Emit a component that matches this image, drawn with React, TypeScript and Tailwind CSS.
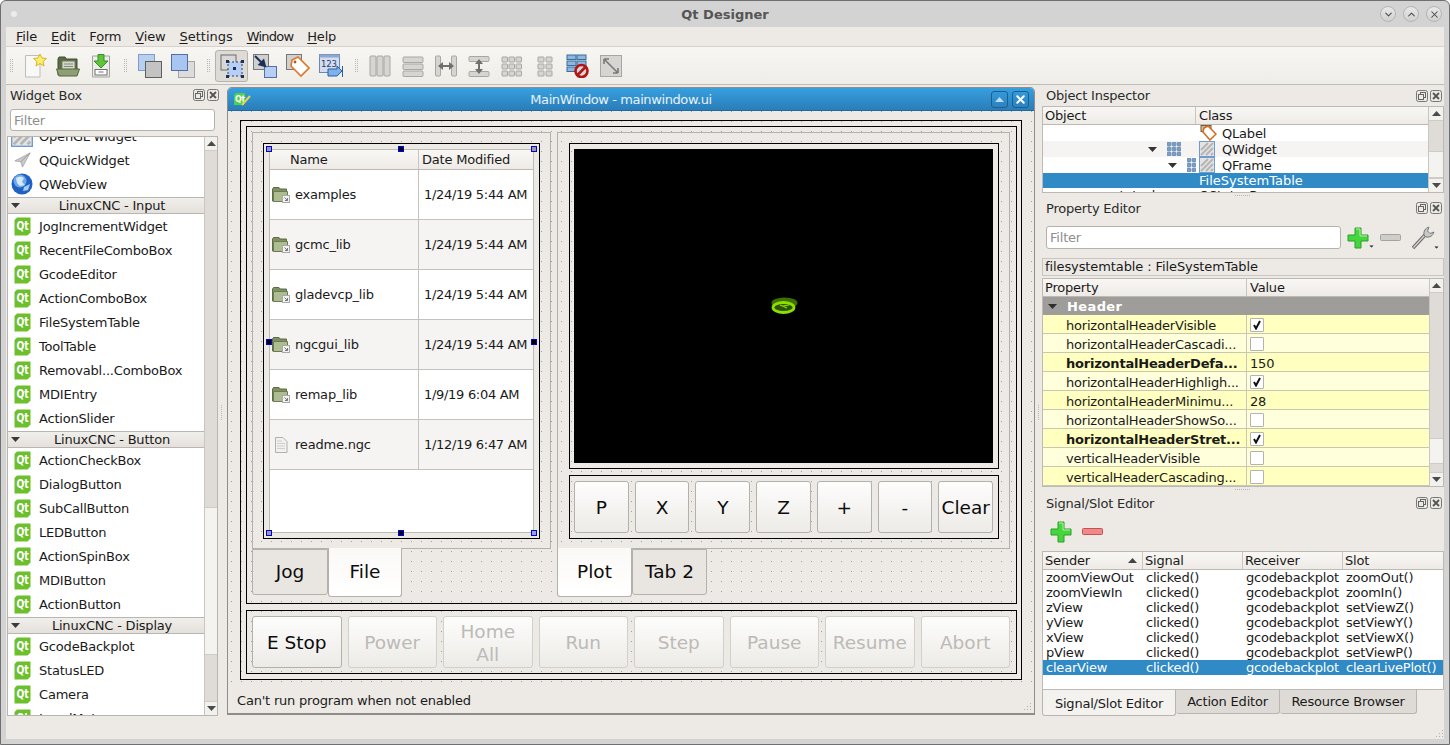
import React from 'react';
import { ChevronDown, ChevronUp, X } from 'lucide-react';

// ============================================================================
// DATA
// ============================================================================

const inputWidgets = ['JogIncrementWidget', 'RecentFileComboBox', 'GcodeEditor', 'ActionComboBox', 'FileSystemTable', 'ToolTable', 'Removabl...ComboBox', 'MDIEntry', 'ActionSlider'];
const buttonWidgets = ['ActionCheckBox', 'DialogButton', 'SubCallButton', 'LEDButton', 'ActionSpinBox', 'MDIButton', 'ActionButton'];
const displayWidgets = ['GcodeBackplot', 'StatusLED', 'Camera', 'LevelMeter'];

const files = [
  { name: 'examples', date: '1/24/19 5:44 AM', dir: true },
  { name: 'gcmc_lib', date: '1/24/19 5:44 AM', dir: true },
  { name: 'gladevcp_lib', date: '1/24/19 5:44 AM', dir: true },
  { name: 'ngcgui_lib', date: '1/24/19 5:44 AM', dir: true },
  { name: 'remap_lib', date: '1/9/19 6:04 AM', dir: true },
  { name: 'readme.ngc', date: '1/12/19 6:47 AM', dir: false },
];

const properties = [
  { name: 'horizontalHeaderVisible', check: true },
  { name: 'horizontalHeaderCascadi...', check: false },
  { name: 'horizontalHeaderDefa...', value: '150', bold: true },
  { name: 'horizontalHeaderHighligh...', check: true },
  { name: 'horizontalHeaderMinimu...', value: '28' },
  { name: 'horizontalHeaderShowSo...', check: false },
  { name: 'horizontalHeaderStret...', check: true, bold: true },
  { name: 'verticalHeaderVisible', check: false },
  { name: 'verticalHeaderCascading...', check: false },
];

const connections = [
  ['zoomViewOut', 'zoomOut()'],
  ['zoomViewIn', 'zoomIn()'],
  ['zView', 'setViewZ()'],
  ['yView', 'setViewY()'],
  ['xView', 'setViewX()'],
  ['pView', 'setViewP()'],
  ['clearView', 'clearLivePlot()'],
];

const headerBg = 'bg-gradient-to-b from-[#f9f7f4] to-[#eeebe7] border-b border-[#bdbab5]';
const formDots = 'bg-[radial-gradient(circle_at_3.5px_0.5px,#a0a0a0_0.6px,transparent_0.8px)] bg-[length:10px_10px]';

// ============================================================================
// ICONS
// ============================================================================

const QtIcon = () => (
  <svg width="17" height="19" viewBox="0 0 17 19" className="shrink-0">
    <path d="M3 0.5 H16.5 V15.5 L13.5 18.5 H0.5 V3 Z" fill="#6cc02c" />
    <text x="2.5" y="13" fontSize="12" fontWeight="700" fill="#fff" textLength="12" lengthAdjust="spacingAndGlyphs">Qt</text>
  </svg>
);

const HatchIcon = ({ size = 16 }: { size?: number }) => (
  <svg width={size} height={size} viewBox="0 0 16 16" className="shrink-0">
    <rect x="0.5" y="0.5" width="15" height="15" fill="#e4e4e4" stroke="#6f9bd1" />
    <path d="M2 9 L9 2 M2 14 L14 2 M7 14 L14 7 M12 14 L14 12" stroke="#b5b5b5" strokeWidth="2" />
  </svg>
);

const PlaneIcon = () => (
  <svg width="17" height="16" viewBox="0 0 20 18" preserveAspectRatio="none" className="shrink-0">
    <path d="M19 1 L1 10 L8 11 L10 17 Z" fill="#c9c9c9" stroke="#9c9c9c" strokeWidth="0.8" />
    <path d="M19 1 L8 11" stroke="#8e8e8e" strokeWidth="0.8" />
  </svg>
);

const GlobeIcon = () => (
  <svg width="22" height="22" viewBox="0 0 22 22" className="shrink-0 -ml-[3px]">
    <circle cx="11" cy="11" r="10.5" fill="#1f62c4" />
    <circle cx="9" cy="8" r="6.5" fill="#6fa9ea" />
    <path d="M5 5 Q10 2 13 5 L11 9 L14 12 L9 13 L6 10 Z" fill="#d7e8fa" />
    <path d="M13 14 L19 11 L17 17 L12 18 Z" fill="#a9cdf2" />
  </svg>
);

const FolderIcon = () => (
  <svg width="18" height="16" viewBox="0 0 18 16" className="shrink-0">
    <path d="M0.5 14 V2 L1.5 0.5 H7 L8 2 H14.5 V14 Z" fill="#7f9160" stroke="#5d6b47" />
    <path d="M1.5 4.5 H15.5 V14.5 H1.5 Z" fill="#aebc92" stroke="#6d7b55" />
    <rect x="10.5" y="8.5" width="7" height="7" fill="#f2f2f0" stroke="#a9a9a9" />
    <path d="M12.5 10.5 L15.5 13.5 M15.5 11 V13.5 H13" stroke="#777" fill="none" />
  </svg>
);

const DocIcon = () => (
  <svg width="14" height="16" viewBox="0 0 14 16" className="shrink-0">
    <path d="M1.5 0.5 H9 L13 4.5 V15.5 H1.5 Z" fill="#f0f0ee" stroke="#b0b0ae" />
    <path d="M3 4 H8 M3 6.5 H11 M3 9 H11 M3 11.5 H11" stroke="#cfcfcd" />
  </svg>
);

const TagIcon = () => (
  <svg width="17" height="16" viewBox="0 0 17 16" className="shrink-0">
    <rect x="1" y="0.5" width="10" height="6" fill="#d8b98a" stroke="#6b5a3c" />
    <path d="M4 3 L8 1 L16 9 L10 15 L3 7 Z" fill="#fff" stroke="#d2691e" strokeWidth="1.5" />
  </svg>
);

const GridDots = ({ cols = 3 }: { cols?: number }) => (
  <svg width={cols === 3 ? 14 : 9} height="14" viewBox={cols === 3 ? '0 0 14 14' : '5 0 9 14'} className="shrink-0">
    {[1, 6, 11].map((y) =>
      [1, 6, 11].map((x) => <rect key={`${x}-${y}`} x={x - 1} y={y - 1} width="4" height="4" rx="1" fill="#7e9fc4" stroke="#5a7da5" strokeWidth="0.5" />)
    )}
  </svg>
);

const Triangle = ({ up = false, className = '' }: { up?: boolean; className?: string }) => (
  <svg width="9" height="5" viewBox="0 0 9 5" className={`shrink-0 ${className}`}>
    <path d={up ? 'M0 5 L4.5 0 L9 5 Z' : 'M0 0 L9 0 L4.5 5 Z'} fill="currentColor" />
  </svg>
);

const FloatIcon = () => (
  <svg width="12" height="12" viewBox="0 0 12 12">
    <rect x="0.5" y="0.5" width="11" height="11" rx="2" fill="none" stroke="#777" />
    <rect x="4.5" y="2.5" width="5" height="5" fill="none" stroke="#666" />
    <rect x="2.5" y="4.5" width="5" height="5" fill="#edeae6" stroke="#666" />
  </svg>
);

const CloseIcon = () => (
  <svg width="12" height="12" viewBox="0 0 12 12">
    <rect x="0.5" y="0.5" width="11" height="11" rx="2" fill="none" stroke="#777" />
    <path d="M3 3 L9 9 M9 3 L3 9" stroke="#555" strokeWidth="1.8" />
  </svg>
);

const PlusIcon = ({ size = 22 }: { size?: number }) => (
  <svg width={size} height={size} viewBox="0 0 22 22" className="shrink-0">
    <path d="M8 1 H14 V8 H21 V14 H14 V21 H8 V14 H1 V8 H8 Z" fill="#45d63d" stroke="#2c9e2a" />
    <path d="M9 2 H13 V9 H20" fill="none" stroke="#b4f2a8" />
  </svg>
);

const MinusIcon = ({ red = false }: { red?: boolean }) => (
  <svg width="21" height="7" viewBox="0 0 21 7" className="shrink-0">
    <rect x="0.5" y="0.5" width="20" height="6" rx="1" fill={red ? '#f08a8a' : '#cfcdc9'} stroke={red ? '#c95050' : '#a5a3a0'} />
  </svg>
);

const WrenchIcon = () => (
  <svg width="24" height="24" viewBox="0 0 24 24" className="shrink-0">
    <path d="M2 22 L14 9" stroke="#6a6a6a" strokeWidth="3.4" />
    <path d="M2.5 21.5 L13.5 9.5" stroke="#d8d8d8" strokeWidth="1.2" />
    <path d="M13 9 Q12 3 18 1 L16.5 5 L19 7.5 L23 6 Q21 12 15 11 Z" fill="#c8c8c8" stroke="#7a7a7a" />
  </svg>
);

const ResizeGrip = ({ className = '' }: { className?: string }) => (
  <svg width="9" height="9" viewBox="0 0 9 9" className={`shrink-0 ${className}`}>
    {[[7, 1], [4, 4], [7, 4], [1, 7], [4, 7], [7, 7]].map(([x, y]) => (
      <rect key={`${x}${y}`} x={x} y={y} width="1" height="1" fill="#b3b1ac" />
    ))}
  </svg>
);

const ToolbarIcon = ({ name }: { name: string }) => {
  const grey = { fill: '#d6d5d2', stroke: '#a8a7a4' };
  const dark = '#6f6f6f';
  return (
    <svg width="24" height="24" viewBox="0 0 24 24">
      {name === 'new' && (
        <>
          <path d="M2.5 1.5 H17 V23 H2.5 Z" fill="#f8f8f6" stroke="#bdbdba" />
          <path d="M17 0 L19 4 L23.5 4.5 L20 7.5 L21 12 L17 9.5 L13 12 L14 7.5 L10.5 4.5 L15 4 Z" fill="#ffef6b" stroke="#d3b628" />
        </>
      )}
      {name === 'open' && (
        <>
          <path d="M2 21 V5 L3 3 H9 L10.5 5 H21 V21 Z" fill="#5b6c45" stroke="#414e30" />
          <rect x="6" y="7" width="13" height="9" fill="#d5d8ce" stroke="#707a62" />
          <path d="M8 10 H17 M8 12.5 H17" stroke="#848c78" />
          <path d="M0.5 15 H23.5 L21 22 H3 Z" fill="#8d9f73" stroke="#56643f" />
        </>
      )}
      {name === 'save' && (
        <>
          <path d="M3.5 2 H20.5 V23 H3.5 Z" fill="#ececea" stroke="#a3a3a0" />
          <rect x="6" y="15.5" width="12" height="5.5" fill="#fff" stroke="#6f6f6d" />
          <rect x="9.5" y="17" width="5" height="2" fill="#b8b8b6" />
          <path d="M9 0.5 H15 V7 H19 L12 14 L5 7 H9 Z" fill="#5fc43a" stroke="#3a8e25" />
        </>
      )}
      {name === 'back' && (
        <>
          <rect x="0.5" y="0.5" width="16" height="16" fill="#b9cff0" stroke="#7e9ccc" />
          <rect x="7.5" y="7.5" width="16" height="16" fill="#c3c3c3" stroke="#5f5f5f" />
        </>
      )}
      {name === 'front' && (
        <>
          <rect x="7.5" y="7.5" width="16" height="16" fill="#dcdcdc" stroke="#a5a5a5" />
          <rect x="0.5" y="0.5" width="16" height="16" fill="#a9c5f2" stroke="#51709f" />
        </>
      )}
      {name === 'widgets' && (
        <>
          <rect x="1" y="1" width="15" height="15" fill="#d8d8d8" stroke="#6d6d6d" />
          <rect x="8" y="8" width="14" height="14" fill="#b7cff5" stroke="#26406b" strokeDasharray="2 2" />
          {[[6, 6], [21, 6], [6, 21], [21, 21], [13, 13]].map(([x, y]) => (
            <rect key={`${x}${y}`} x={x} y={y} width="3" height="3" fill="#1c2f55" />
          ))}
        </>
      )}
      {name === 'signals' && (
        <>
          <rect x="0.5" y="0.5" width="15" height="15" fill="#d0d0d0" stroke="#777" />
          <rect x="11.5" y="12.5" width="12" height="11" fill="#b7cff5" stroke="#53719f" />
          <path d="M2 2 L10 10 M12 12 L6.5 10.5 L10.5 6.5 Z" stroke="#1c2f55" strokeWidth="2" fill="#1c2f55" />
        </>
      )}
      {name === 'buddies' && (
        <>
          <rect x="0.5" y="0.5" width="15" height="15" fill="#d0d0d0" stroke="#777" />
          <path d="M6 6 L12 3 L23 14 L15 22 L5 12 Z" fill="#fff" stroke="#e0762a" strokeWidth="1.6" />
          <circle cx="9" cy="8" r="1.4" fill="#b05a1c" />
        </>
      )}
      {name === 'tabs' && (
        <>
          <rect x="0.5" y="0.5" width="20" height="18" fill="#d3ddef" stroke="#6b86b0" />
          <rect x="0.5" y="0.5" width="20" height="3" fill="#8ea8cf" />
          <text x="2" y="13" fontSize="8.5" fill="#26406b">123</text>
          <path d="M9 15 H18 V12 L23 17 L18 22 H9 Z" fill="#7fb2ea" stroke="#2a5da5" />
          <rect x="23" y="12" width="1" height="11" fill="#2a5da5" />
        </>
      )}
      {name === 'lv' && [2, 9, 16].map((x) => <rect key={x} x={x} y="2" width="6" height="20" rx="1" {...grey} />)}
      {name === 'lh' && [3, 10, 17].map((y) => <rect key={y} x="2" y={y} width="20" height="5.5" rx="1" {...grey} />)}
      {name === 'sv' && (
        <>
          <rect x="1.5" y="2" width="5" height="20" rx="1" {...grey} />
          <rect x="17.5" y="2" width="5" height="20" rx="1" {...grey} />
          <path d="M4 12 L9 8 V16 Z M20 12 L15 8 V16 Z" fill={dark} />
          <rect x="8" y="11" width="8" height="2" fill={dark} />
        </>
      )}
      {name === 'sh' && (
        <>
          <rect x="2" y="2.5" width="20" height="5" rx="1" {...grey} />
          <rect x="2" y="17.5" width="20" height="5" rx="1" {...grey} />
          <path d="M12 5 L8 10 H16 Z M12 20 L8 15 H16 Z" fill={dark} />
          <rect x="11" y="9" width="2" height="7" fill={dark} />
        </>
      )}
      {name === 'grid' &&
        [3, 10, 17].map((y) => [2, 9, 16].map((x) => <rect key={`${x}${y}`} x={x} y={y} width="5.5" height="5" rx="0.5" {...grey} />))}
      {name === 'form' &&
        [3, 10, 17].map((y) => [5, 13].map((x) => <rect key={`${x}${y}`} x={x} y={y} width="6" height="5" rx="0.5" {...grey} />))}
      {name === 'break' && (
        <>
          {[1, 7, 13].map((y) => (
            <g key={y}>
              <rect x="1" y={y} width="9" height="4.5" fill="#8fb7dd" stroke="#3a6c9c" />
              <rect x="11" y={y} width="9" height="4.5" fill="#8fb7dd" stroke="#3a6c9c" />
            </g>
          ))}
          <circle cx="15.5" cy="17" r="6" fill="#d8d8d8" stroke="#b01818" strokeWidth="2.6" />
          <path d="M11 21.5 L20 12.5" stroke="#b01818" strokeWidth="2.6" />
        </>
      )}
      {name === 'adjust' && (
        <>
          <rect x="1.5" y="1.5" width="21" height="21" {...grey} />
          <path d="M5 5 L19 19 M5 5 H10 M5 5 V10 M19 19 H14 M19 19 V14" stroke="#7a7a78" strokeWidth="1.6" fill="none" />
        </>
      )}
    </svg>
  );
};

// ============================================================================
// SMALL PIECES
// ============================================================================

const ToolHandle = ({ className = '' }: { className?: string }) => (
  <div className={`grid grid-cols-2 gap-x-[1px] gap-y-[1px] w-[3px] shrink-0 ${className}`}>
    {Array.from({ length: 14 }).map((_, i) => (
      <span key={i} className="w-[1px] h-[1px] bg-[#b9b7b3]" />
    ))}
  </div>
);

const ToolButton = ({ name, active = false }: { name: string; active?: boolean }) => (
  <div className={`w-[33px] h-[32px] flex items-center justify-center shrink-0 rounded-[3px] ${active ? 'bg-[#dedbd6] border border-[#b5b2ad]' : ''}`}>
    <ToolbarIcon name={name} />
  </div>
);

const MenuItem = ({ before = '', mark, after, className = '' }: { before?: string; mark: string; after: string; className?: string }) => (
  <span className={`text-[#1c1c1c] ${className}`}>
    {before}
    <span className="underline underline-offset-2">{mark}</span>
    {after}
  </span>
);

const DockTitle = ({ title, className = '' }: { title: string; className?: string }) => (
  <div className={`flex items-center shrink-0 justify-between ${className}`}>
    <span className="text-[#2a2a2a]">{title}</span>
    <div className="flex gap-[2px]">
      <FloatIcon />
      <CloseIcon />
    </div>
  </div>
);

const FilterInput = ({ className = '' }: { className?: string }) => (
  <div className={`bg-white border border-[#b5b2ad] rounded-[3px] flex items-center pl-[3px] text-[#8e8e8e] shrink-0 ${className}`}>Filter</div>
);

const ScrollBar = ({ beforeClass, thumbClass, className = '' }: { beforeClass: string; thumbClass: string; className?: string }) => (
  <div className={`flex flex-col shrink-0 bg-[#dfdcd7] text-[#4a4a4a] border-l border-[#c9c6c1] ${className}`}>
    <div className="h-[14px] shrink-0 flex items-center justify-center bg-[#f3f1ee] border-b border-[#cfccc7]">
      <Triangle up />
    </div>
    <div className={`shrink-0 ${beforeClass}`} />
    <div className={`shrink-0 bg-[#f5f3f0] border-y border-[#cfccc7] ${thumbClass}`} />
    <div className="flex-1" />
    <div className="h-[14px] shrink-0 flex items-center justify-center bg-[#f3f1ee] border-t border-[#cfccc7]">
      <Triangle />
    </div>
  </div>
);

const WidgetRow = ({ label, icon }: { label: string; icon?: React.ReactNode }) => (
  <div className="h-[24px] shrink-0 flex items-center text-[#1a1a1a] bg-white">
    <div className="w-[31px] pl-[6px] flex items-center shrink-0">{icon ?? <QtIcon />}</div>
    <span>{label}</span>
  </div>
);

const Category = ({ label }: { label: string }) => (
  <div className="h-[17px] mt-[1px] shrink-0 flex items-center relative justify-center bg-gradient-to-b from-[#f1efeb] to-[#e4e1dc] border-y border-[#b9b6b1] text-[#1a1a1a]">
    <Triangle className="absolute left-[3px] text-[#3a3a3a]" />
    <span className="pl-[12px]">{label}</span>
  </div>
);

const Handle = ({ className, black = false, grey = false }: { className: string; black?: boolean; grey?: boolean }) => (
  <span className={`absolute w-[6px] h-[6px] border border-[#0000e0] ${black ? 'bg-black' : grey ? 'bg-[#9a9a9a]' : 'bg-[#8fa6e6]'} ${className}`} />
);

const FormButton = ({ children, disabled = false, className = '' }: { children: React.ReactNode; disabled?: boolean; className?: string }) => (
  <div
    className={`flex-1 flex items-center justify-center text-center rounded-[3px] border bg-gradient-to-b from-[#fdfdfc] to-[#edebe7] text-[18.5px] leading-[23px] tracking-[0px] ${
      disabled ? 'border-[#d2d0cb] text-[#bcbab7]' : 'border-[#b3b1ac] text-[#0c0c0c]'
    } ${className}`}
  >
    {children}
  </div>
);

const FormTab = ({ label, selected = false, className = '' }: { label: string; selected?: boolean; className?: string }) => (
  <div
    className={`flex items-center justify-center text-[18.5px] tracking-[0px] text-[#0c0c0c] border border-[#b3b1ac] rounded-b-[3px] shrink-0 ${
      selected ? 'h-[49px] -mt-[1px] border-t-0 bg-gradient-to-b from-[#fbf9f6] to-white' : 'h-[46px] bg-[#e9e6e2]'
    } ${className}`}
  >
    {label}
  </div>
);

const CheckBox = ({ checked }: { checked: boolean }) => (
  <span className="w-[14px] h-[14px] bg-white border border-[#b5b3ae] rounded-[1px] flex items-center justify-center shrink-0">
    {checked && (
      <svg width="10" height="10" viewBox="0 0 10 10">
        <path d="M2 5 L4 8.5 L8 1" fill="none" stroke="#111" strokeWidth="2" />
      </svg>
    )}
  </span>
);

const SplitDotsH = ({ className }: { className: string }) => (
  <div className={`shrink-0 flex items-center justify-center gap-[1px] ${className}`}>
    {Array.from({ length: 8 }).map((_, i) => (
      <span key={i} className="w-[1px] h-[1px] bg-[#b9b7b3]" />
    ))}
  </div>
);

const SplitDotsV = ({ className }: { className: string }) => (
  <div className={`flex flex-col items-center justify-center gap-[1px] shrink-0 ${className}`}>
    {Array.from({ length: 8 }).map((_, i) => (
      <span key={i} className="w-[1px] h-[1px] bg-[#b9b7b3]" />
    ))}
  </div>
);

// ============================================================================
// PANELS
// ============================================================================

const WidgetBox = () => (
  <div className="w-[213px] shrink-0 flex flex-col">
    <DockTitle title="Widget Box" className="h-[22px] pl-[4px] pb-[2px]" />
    <FilterInput className="h-[22px] mt-[2px] ml-[4px] w-[205px]" />
    <div className="mt-[5px] ml-[1px] w-[211px] h-[580px] flex border border-[#b9b6b1] overflow-hidden">
      <div className="flex-1 flex flex-col bg-white overflow-hidden">
        <div className="-mt-[13px] flex flex-col">
          <WidgetRow label="OpenGL widget" icon={<span className="-ml-[3px]"><HatchIcon size={22} /></span>} />
          <WidgetRow label="QQuickWidget" icon={<PlaneIcon />} />
          <WidgetRow label="QWebView" icon={<GlobeIcon />} />
          <Category label="LinuxCNC - Input" />
          {inputWidgets.map((w) => <WidgetRow key={w} label={w} />)}
          <Category label="LinuxCNC - Button" />
          {buttonWidgets.map((w) => <WidgetRow key={w} label={w} />)}
          <Category label="LinuxCNC - Display" />
          {displayWidgets.map((w) => <WidgetRow key={w} label={w} />)}
        </div>
      </div>
      <ScrollBar className="w-[13px]" beforeClass="h-[356px]" thumbClass="h-[148px]" />
    </div>
  </div>
);

const FileTable = () => (
  <div className="relative w-[277px] h-[396px] border border-black p-[5px] shrink-0">
    <div className="w-full h-full bg-white border border-[#bdbbb6] flex flex-col">
      <div className={`h-[20px] shrink-0 flex items-center ${headerBg}`}>
        <div className="w-[149px] h-full flex items-center pl-[20px] border-r border-[#c9c6c1] text-[#1a1a1a]">Name</div>
        <div className="pl-[3px] text-[#1a1a1a]">Date Modified</div>
      </div>
      {files.map((f, i) => (
        <div key={f.name} className={`h-[50px] shrink-0 flex items-center border-b border-[#c4c2be] text-[#1a1a1a] ${i % 2 ? 'bg-[#f5f4f2]' : 'bg-white'}`}>
          <div className="w-[149px] h-full flex items-center pl-[2px] border-r border-[#c4c2be]">
            <div className="w-[18px] flex justify-center shrink-0">{f.dir ? <FolderIcon /> : <DocIcon />}</div>
            <span className="ml-[5px]">{f.name}</span>
          </div>
          <span className="pl-[5px] tracking-[-0.3px]">{f.date}</span>
        </div>
      ))}
    </div>
    <Handle grey className="left-[2px] top-[2px]" />
    <Handle black className="left-[134px] top-[2px]" />
    <Handle grey className="right-[2px] top-[2px]" />
    <Handle black className="left-[2px] top-[195px]" />
    <Handle black className="right-[2px] top-[195px]" />
    <Handle grey className="left-[2px] bottom-[2px]" />
    <Handle black className="left-[134px] bottom-[2px]" />
    <Handle className="right-[2px] bottom-[2px]" />
  </div>
);

const BackplotMark = () => (
  <svg width="28" height="18" viewBox="0 0 28 18" className="ml-[2px]">
    <ellipse cx="13.5" cy="6" rx="13" ry="5.5" fill="#3f6f00" />
    <ellipse cx="12.5" cy="10.5" rx="10.5" ry="5" fill="#2e5200" stroke="#8ce000" strokeWidth="2.8" />
    <path d="M9 8 L16 11 M12 9 L18 8" stroke="#8ce000" strokeWidth="1.2" />
  </svg>
);

const FormWindow = () => (
  <div className="w-[808px] h-[628px] mt-[2px] ml-[3px] flex flex-col border border-[#8f8d89] border-b-2 rounded-t-[5px] bg-[#edeae6] overflow-hidden shrink-0">
    {/* Title bar */}
    <div className="h-[23px] shrink-0 flex items-center bg-gradient-to-b from-[#37a0e0] to-[#2a7db8] border-b border-[#1e6a9f]">
      <svg width="18" height="14" viewBox="0 0 18 14" className="ml-[5px] shrink-0">
        <path d="M1 3 L3 1 H12 V11 L10 13 H1 Z" fill="#4fd24a" />
        <text x="2" y="10" fontSize="8" fontWeight="700" fill="#fff">Qt</text>
        <path d="M9 13 L17 4" stroke="#e8d44a" strokeWidth="2" />
      </svg>
      <div className="flex-1 text-center text-[#e8f2f9] tracking-[-0.4px]">MainWindow - mainwindow.ui</div>
      <div className="flex gap-[4px] pr-[5px]">
        <div className="w-[17px] h-[17px] rounded-[3px] border border-[#1c5f8e] flex items-center justify-center text-[#bcdcf2]">
          <Triangle up />
        </div>
        <div className="w-[17px] h-[17px] rounded-[3px] border border-[#1c5f8e] flex items-center justify-center">
          <X size={13} strokeWidth={3.5} color="#fff" />
        </div>
      </div>
    </div>

    {/* Central widget */}
    <div className={`h-[579px] shrink-0 pt-[9px] pl-[12px] ${formDots}`}>
      <div className="w-[782px] h-[560px] border border-black pt-[5px] pl-[5px] flex flex-col gap-[6px]">
        <div className="w-[771px] h-[478px] border border-black pt-[5px] pl-[5px] flex gap-[6px] shrink-0">
          {/* File tab widget */}
          <div className="w-[299px] flex flex-col shrink-0">
            <div className="h-[417px] border border-[#b3b1ac] pt-[10px] pl-[10px] shrink-0">
              <FileTable />
            </div>
            <div className="flex">
              <FormTab label="Jog" className="w-[76px]" />
              <FormTab label="File" selected className="w-[74px]" />
            </div>
          </div>

          {/* Plot tab widget */}
          <div className="w-[453px] flex flex-col shrink-0">
            <div className="h-[417px] border border-[#b3b1ac] pt-[10px] pl-[11px] flex flex-col gap-[6px] shrink-0">
              <div className="w-[430px] h-[326px] border border-black pl-[4px] pt-[5px] shrink-0">
                <div className="w-[419px] h-[314px] bg-black flex items-center justify-center">
                  <BackplotMark />
                </div>
              </div>
              <div className="w-[430px] h-[64px] border border-black pl-[4px] pr-[5px] py-[5px] flex gap-[6px] shrink-0">
                {['P', 'X', 'Y', 'Z', '+', '-', 'Clear'].map((b) => (
                  <FormButton key={b} className="basis-0">{b}</FormButton>
                ))}
              </div>
            </div>
            <div className="flex">
              <FormTab label="Plot" selected className="w-[75px]" />
              <FormTab label="Tab 2" className="w-[75px]" />
            </div>
          </div>
        </div>

        <div className="w-[771px] h-[64px] border border-black pl-[5px] pr-[6px] py-[5px] flex gap-[6px] shrink-0">
          <FormButton className="basis-0">E Stop</FormButton>
          <FormButton disabled className="basis-0">Power</FormButton>
          <FormButton disabled className="basis-0 pt-[2px]">Home<br />All</FormButton>
          <FormButton disabled className="basis-0">Run</FormButton>
          <FormButton disabled className="basis-0">Step</FormButton>
          <FormButton disabled className="basis-0">Pause</FormButton>
          <FormButton disabled className="basis-0">Resume</FormButton>
          <FormButton disabled className="basis-0">Abort</FormButton>
        </div>
      </div>
    </div>

    {/* Status bar */}
    <div className="flex-1 flex items-center justify-between pl-[9px] pr-[2px] pb-[2px] text-[#1a1a1a]">
      <span>Can't run program when not enabled</span>
      <ResizeGrip className="self-end" />
    </div>
  </div>
);

const ObjectInspector = () => (
  <div className="ml-[1px] w-[402px] h-[87px] flex border border-[#bdbab5] shrink-0 overflow-hidden">
    <div className="flex-1 flex flex-col bg-white overflow-hidden">
      <div className={`h-[18px] shrink-0 flex items-center ${headerBg}`}>
        <div className="w-[153px] h-full flex items-center pl-[2px] border-r border-[#c9c6c1]">Object</div>
        <div className="pl-[3px]">Class</div>
      </div>
      <div className="h-[16px] shrink-0 flex items-center pl-[157px]">
        <TagIcon />
        <span className="ml-[5px]">QLabel</span>
      </div>
      <div className="h-[16px] shrink-0 flex items-center bg-[#f5f4f2]">
        <div className="w-[156px] flex items-center pl-[105px] shrink-0">
          <Triangle className="text-[#333]" />
          <span className="ml-[10px]"><GridDots /></span>
        </div>
        <HatchIcon />
        <span className="ml-[7px]">QWidget</span>
      </div>
      <div className="h-[16px] shrink-0 flex items-center">
        <div className="w-[156px] flex items-center pl-[125px] shrink-0">
          <Triangle className="text-[#333]" />
          <span className="ml-[10px]"><GridDots cols={2} /></span>
        </div>
        <HatchIcon />
        <span className="ml-[7px]">QFrame</span>
      </div>
      <div className="h-[15px] shrink-0 flex items-center bg-[#2f8ac6] text-white pl-[156px] tracking-[0px]">FileSystemTable</div>
      <div className="h-[16px] shrink-0 flex items-start pt-[1px] text-[#1a1a1a]">
        <span className="w-[156px] pl-[70px] shrink-0">statusbar</span>
        <span>QStatusBar</span>
      </div>
    </div>
    <ScrollBar className="w-[15px]" beforeClass="h-[30px]" thumbClass="h-[27px]" />
  </div>
);

const PropertyEditor = () => (
  <>
    <div className="h-[23px] mt-[7px] ml-[5px] flex items-center shrink-0">
      <FilterInput className="w-[295px] h-[23px]" />
      <div className="ml-[6px] flex items-end w-[28px]">
        <PlusIcon />
        <Triangle className="scale-50 -ml-[2px] text-[#333]" />
      </div>
      <div className="ml-[5px]"><MinusIcon /></div>
      <div className="ml-[10px] flex items-end">
        <WrenchIcon />
        <Triangle className="scale-50 -ml-[3px] text-[#333]" />
      </div>
    </div>
    <div className="h-[18px] mt-[9px] ml-[1px] w-[402px] flex items-center pl-[2px] pb-[1px] border border-[#c9c6c1] shrink-0 tracking-[-0.1px]">filesystemtable : FileSystemTable</div>
    <div className="mt-[2px] ml-[1px] w-[402px] h-[209px] flex border border-[#bdbab5] shrink-0">
      <div className="flex-1 flex flex-col">
        <div className={`h-[18px] shrink-0 flex items-center ${headerBg}`}>
          <div className="w-[204px] h-full flex items-center pl-[2px] border-r border-[#c9c6c1]">Property</div>
          <div className="pl-[3px]">Value</div>
        </div>
        <div className="h-[18px] shrink-0 flex items-center bg-[#9f9d99] text-white font-bold">
          <Triangle className="ml-[5px] text-[#2e2e2e]" />
          <span className="ml-[10px] tracking-[0.4px]">Header</span>
        </div>
        {properties.map((p, i) => (
          <div key={p.name} className={`h-[19px] shrink-0 flex items-center border-b border-[#c8c7b4] text-[#1a1a1a] ${i % 2 ? 'bg-[#ffffdc]' : 'bg-[#ffffbf]'}`}>
            <div className={`w-[204px] h-full flex items-center pl-[23px] pt-[2px] border-r border-[#c8c7b4] whitespace-nowrap overflow-hidden ${p.bold ? 'font-bold' : ''}`}>{p.name}</div>
            <div className="pl-[3px] pt-[2px] flex items-center">
              {p.value ? p.value : <CheckBox checked={!!p.check} />}
            </div>
          </div>
        ))}
      </div>
      <ScrollBar className="w-[14px]" beforeClass="h-[145px]" thumbClass="h-[26px]" />
    </div>
  </>
);

const SignalSlotEditor = () => (
  <>
    <div className="h-[37px] ml-[9px] flex items-center shrink-0 gap-[10px] pb-[2px]">
      <PlusIcon />
      <MinusIcon red />
    </div>
    <div className="ml-[1px] w-[402px] h-[139px] bg-white border border-[#bdbab5] flex flex-col shrink-0">
      <div className={`h-[18px] shrink-0 flex items-center ${headerBg}`}>
        <div className="w-[100px] h-full flex items-center justify-between pl-[2px] pr-[5px] border-r border-[#c9c6c1]">
          Sender
          <Triangle up className="text-[#444]" />
        </div>
        <div className="w-[100px] h-full flex items-center pl-[2px] border-r border-[#c9c6c1]">Signal</div>
        <div className="w-[100px] h-full flex items-center pl-[2px] border-r border-[#c9c6c1]">Receiver</div>
        <div className="pl-[2px]">Slot</div>
      </div>
      {connections.map(([sender, slot]) => (
        <div key={sender} className={`h-[15px] shrink-0 flex items-center ${sender === 'clearView' ? 'bg-[#2f8ac6] text-white' : 'text-[#1a1a1a]'}`}>
          <span className="w-[100px] pl-[3px]">{sender}</span>
          <span className="w-[100px] pl-[3px]">clicked()</span>
          <span className="w-[100px] pl-[3px]">gcodebackplot</span>
          <span className="pl-[3px]">{slot}</span>
        </div>
      ))}
    </div>
    <div className="ml-[1px] flex shrink-0">
      <div className="w-[134px] h-[26px] pt-[2px] flex items-center justify-center bg-[#f4f2ef] border border-t-0 border-[#b9b6b1] rounded-b-[3px]">Signal/Slot Editor</div>
      <div className="w-[104px] h-[24px] flex items-center justify-center bg-[#dedbd6] border border-t-0 border-l-0 border-[#b9b6b1] rounded-b-[3px]">Action Editor</div>
      <div className="w-[137px] h-[24px] flex items-center justify-center bg-[#dedbd6] border border-t-0 border-l-0 border-[#b9b6b1] rounded-b-[3px]">Resource Browser</div>
    </div>
    <ResizeGrip className="self-end mt-auto mb-[1px]" />
  </>
);

// ============================================================================
// APP
// ============================================================================

const App: React.FC = () => (
  <div className="w-[1450px] h-[745px] overflow-hidden flex flex-col bg-[#d3d3d3] border border-[#6f6f6f] rounded-t-[6px] font-['DejaVu_Sans',sans-serif] text-[13px] leading-none tracking-[-0.2px] text-[#1a1a1a]">
    {/* Window title bar */}
    <div className="h-[26px] shrink-0 grid grid-cols-[1fr_auto_1fr] items-center px-[4px]">
      <span className="ml-[6px] w-[6px] h-[6px] rounded-full bg-[#ececec]" />
      <span className="font-bold text-[#555555] tracking-[0px]">Qt Designer</span>
      <div className="flex justify-end gap-[7px] pr-[3px]">
        {[ChevronDown, ChevronUp, X].map((Icon, i) => (
          <span key={i} className="w-[16px] h-[16px] rounded-full border border-[#b4b4b4] bg-gradient-to-b from-[#e9e9e9] to-[#d0d0d0] flex items-center justify-center">
            <Icon size={11} strokeWidth={2.2} color="#4a4a4a" />
          </span>
        ))}
      </div>
    </div>

    <div className="ml-[5px] w-[1438px] h-[712px] shrink-0 flex flex-col bg-[#edeae6]">
      {/* Menu bar */}
      <div className="h-[20px] shrink-0 flex items-center gap-[14px] pl-[10px] border-b border-[#d6d3ce]">
        <MenuItem mark="F" after="ile" />
        <MenuItem mark="E" after="dit" />
        <MenuItem before="F" mark="o" after="rm" />
        <MenuItem mark="V" after="iew" />
        <MenuItem mark="S" after="ettings" className="tracking-[0px]" />
        <MenuItem mark="W" after="indow" className="tracking-[-0.8px]" />
        <MenuItem mark="H" after="elp" />
      </div>

      {/* Tool bar */}
      <div className="h-[38px] shrink-0 flex items-center pl-[4px] bg-gradient-to-b from-[#f8f6f2] to-[#efede8] border-b border-[#bfbcb7]">
        <ToolHandle className="mr-[5px]" />
        <ToolButton name="new" />
        <ToolButton name="open" />
        <ToolButton name="save" />
        <ToolHandle className="ml-[7px] mr-[6px]" />
        <ToolButton name="back" />
        <ToolButton name="front" />
        <ToolHandle className="ml-[8px] mr-[5px]" />
        <ToolButton name="widgets" active />
        <ToolButton name="signals" />
        <ToolButton name="buddies" />
        <ToolButton name="tabs" />
        <ToolHandle className="ml-[8px] mr-[5px]" />
        <ToolButton name="lv" />
        <ToolButton name="lh" />
        <ToolButton name="sv" />
        <ToolButton name="sh" />
        <ToolButton name="grid" />
        <ToolButton name="form" />
        <ToolButton name="break" />
        <ToolButton name="adjust" />
      </div>

      {/* Docks and form */}
      <div className="flex-1 flex overflow-hidden">
        <WidgetBox />
        <SplitDotsV className="w-[5px]" />
        <FormWindow />
        <SplitDotsV className="w-[6px]" />
        <div className="w-[403px] shrink-0 flex flex-col">
          <DockTitle title="Object Inspector" className="h-[21px] pl-[5px] pr-[2px]" />
          <ObjectInspector />
          <SplitDotsH className="h-[4px]" />
          <DockTitle title="Property Editor" className="h-[22px] pl-[5px] pr-[2px]" />
          <PropertyEditor />
          <SplitDotsH className="h-[5px]" />
          <DockTitle title="Signal/Slot Editor" className="h-[22px] pl-[5px] pr-[2px]" />
          <SignalSlotEditor />
        </div>
      </div>
    </div>
  </div>
);

export default App;
